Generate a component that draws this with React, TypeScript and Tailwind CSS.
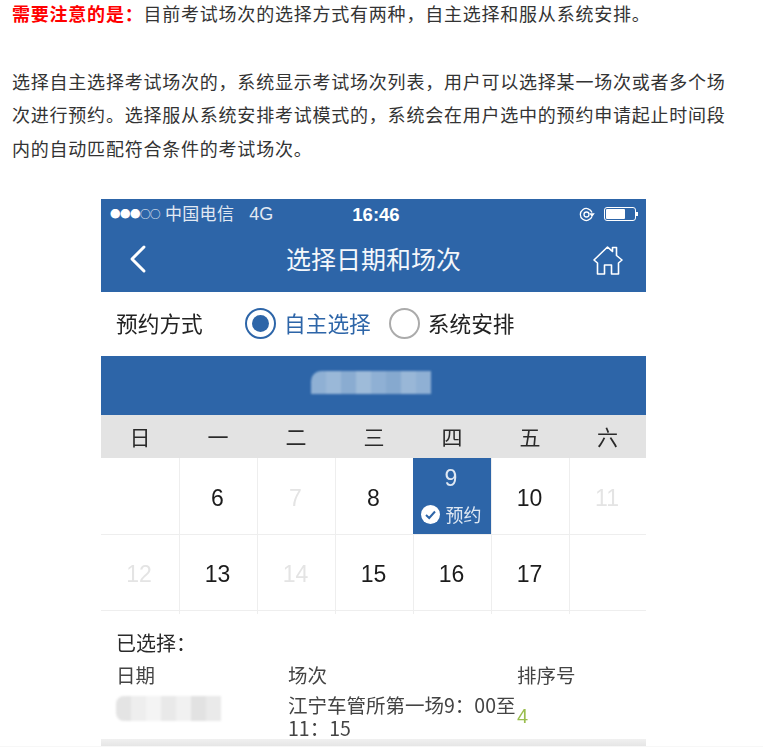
const FONT = "font-['Noto_Sans_CJK_SC','Liberation_Sans',sans-serif]"
const NUM = "font-['Liberation_Sans','Noto_Sans_CJK_SC',sans-serif]"
const COLS = 'grid-cols-[78px_78px_78px_78px_78px_78px_1fr]'
const weekdays = ['日', '一', '二', '三', '四', '五', '六']

function Cell({ value, muted, first }: { value?: string; muted?: boolean; first?: boolean }) {
  return (
    <div
      className={`flex items-center justify-center pr-[2px] pt-[3px] text-[23px] ${NUM} ${first ? '' : 'border-l border-[#eeeeee]'} ${
        muted ? 'text-[#e4e4e4]' : 'text-[#1c1c1c]'
      }`}
    >
      {value}
    </div>
  )
}

function Radio({ checked }: { checked?: boolean }) {
  return (
    <span
      className={`flex h-[31px] w-[31px] items-center justify-center rounded-full border-2 ${
        checked ? 'border-[#2d65a8]' : 'border-[#ababab]'
      }`}
    >
      {checked && <span className="h-[17px] w-[17px] rounded-full bg-[#2d65a8]" />}
    </span>
  )
}

function Mosaic({ colors, radius }: { colors: string[]; radius: string }) {
  return (
    <div className={`flex overflow-hidden blur-[1px] ${radius}`}>
      {colors.map((c, i) => (
        <div key={i} className="h-full w-[15px]" style={{ backgroundColor: c }} />
      ))}
    </div>
  )
}

export default function App() {
  return (
    <div className={`flex h-[755px] w-[763px] flex-col overflow-hidden bg-white ${FONT}`}>
      <div className="px-3 text-[18px] leading-[33.6px] tracking-[0.78px] text-[#333333]">
        <p className="-mt-[3px]">
          <strong className="font-bold text-[#ff0000]">需要注意的是：</strong>
          目前考试场次的选择方式有两种，自主选择和服从系统安排。
        </p>
        <p className="mt-[34px] w-[725px]">
          选择自主选择考试场次的，系统显示考试场次列表，用户可以选择某一场次或者多个场次进行预约。选择服从系统安排考试模式的，系统会在用户选中的预约申请起止时间段内的自动匹配符合条件的考试场次。
        </p>
      </div>

      <div className="ml-[101px] mt-[34px] w-[545px] blur-[0.4px]">
        <div className="h-[93px] bg-[#2d65a8] text-white">
          <div className="flex h-[30px] items-center justify-between pl-[9px] pr-[8px] text-[16px]">
            <div className="flex w-[174px] items-center whitespace-nowrap">
              <span className="text-[10.500px] leading-none tracking-[-0.500px]">●●●○○</span>
              <span className="-mt-[3px] ml-[5px] text-[17px] tracking-[0.300px] text-[#e2e9f3]">中国电信</span>
              <span className={`ml-[15px] text-[18px] text-[#e2e9f3] ${NUM}`}>4G</span>
            </div>
            <span className={`ml-[4px] text-[18.500px] font-bold ${NUM}`}>16:46</span>
            <div className="flex w-[174px] items-center justify-end gap-[9px]">
              <svg width="17" height="17" viewBox="0 0 17 17" fill="none" stroke="white" strokeWidth="1.3">
                <path d="M14 10.500a6 6 0 1 1 0-4" />
                <circle cx="8.500" cy="8.500" r="2.500" />
                <path d="M12.500 8h3l-1.500 2z" fill="white" />
              </svg>
              <div className="flex items-center">
                <div className="flex h-[14px] w-[32px] rounded-[3px] border border-white p-px">
                  <div className="w-[19px] rounded-[1px] bg-white" />
                </div>
                <div className="h-[4px] w-[2px] bg-white" />
              </div>
            </div>
          </div>
          <div className="flex h-[62px] items-center justify-between pl-[28px] pr-[22px]">
            <svg width="18" height="30" viewBox="0 0 18 30" fill="none" stroke="white" strokeWidth="3" strokeLinecap="round" strokeLinejoin="round" className="-mt-[3px]">
              <path d="M15 3 3 15l12 12" />
            </svg>
            <span className="-mt-[3px] ml-[8px] text-[25px] leading-none text-[#f4f7fb]">选择日期和场次</span>
            <svg width="32" height="32" viewBox="0 0 32 32" fill="none" stroke="white" strokeWidth="1.600" strokeLinejoin="round">
              <path d="M2 16 15.500 3l5 4.500V3.500h4v8L30 16l-3.500 3v11h-7v-9h-7v9h-7V19z" />
            </svg>
          </div>
        </div>

        <div className="flex h-[64px] items-center pb-[2px] pl-[15px] text-[21.700px] text-[#222222]">
          <span className="w-[129px]">预约方式</span>
          <Radio checked />
          <span className="ml-[8px] text-[#2d65a8]">自主选择</span>
          <span className="ml-[18px]">
            <Radio />
          </span>
          <span className="ml-[8px]">系统安排</span>
        </div>

        <div className="flex h-[59px] items-center justify-center bg-[#2d65a8] pb-[7px]">
          <div className="mr-[6px]">
            <Mosaic
              radius="h-[23px] rounded-tl-[10px]"
              colors={['#8fb0d4', '#9ab8d8', '#8aacd1', '#9ebbd9', '#8fb0d4', '#86a9cf', '#99b7d7', '#8fb0d4']}
            />
          </div>
        </div>

        <div className={`grid h-[43px] ${COLS} bg-[#e3e3e3] text-[#2a2a2a]`}>
          {weekdays.map((d) => (
            <div key={d} className="flex items-center justify-center text-[21px]">
              {d}
            </div>
          ))}
        </div>

        <div className={`grid ${COLS} grid-rows-[76px_76px_1px_3px]`}>
          <Cell first />
          <Cell value="6" />
          <Cell value="7" muted />
          <Cell value="8" />
          <div className="flex flex-col items-center bg-[#2d65a8] pr-[2px] text-[#dfe8f3]">
            <span className={`mt-[6px] text-[23px] leading-[28px] ${NUM}`}>9</span>
            <div className="mt-[10px] flex items-center gap-[6px]">
              <svg width="19" height="19" viewBox="0 0 19 19">
                <circle cx="9.500" cy="9.500" r="9.500" fill="white" />
                <path d="m5 10 3.200 3L14 6.500" fill="none" stroke="#2d65a8" strokeWidth="2" />
              </svg>
              <span className="text-[18px] leading-[24px]">预约</span>
            </div>
          </div>
          <Cell value="10" />
          <Cell value="11" muted />
          <div className={`col-span-7 grid ${COLS} border-t border-[#eeeeee]`}>
            <Cell value="12" muted first />
            <Cell value="13" />
            <Cell value="14" muted />
            <Cell value="15" />
            <Cell value="16" />
            <Cell value="17" />
            <Cell />
          </div>
          <div className="col-span-7 bg-[#eeeeee]" />
          <div className={`col-span-7 grid ${COLS}`}>
            {weekdays.map((d, i) => (
              <div key={d} className={i === 0 ? '' : 'border-l border-[#eeeeee]'} />
            ))}
          </div>
        </div>

        <div className="h-[125px] pl-[15px] text-[#333333]">
          <div className="pt-[15px] text-[20px] leading-[28px] text-[#2a2a2a]">已选择：</div>
          <div className="mt-[6px] grid grid-cols-[172px_229px_1fr] text-[19.500px] leading-[23px] text-[#444444]">
            <div className="h-[23px]">日期</div>
            <div>场次</div>
            <div>排序号</div>
            <div className="mt-[10px]">
              <Mosaic
                radius="h-[25px] w-[105px] rounded-l-[8px]"
                colors={['#e4e4e4', '#eeeeee', '#f4f4f4', '#e9e9e9', '#f1f1f1', '#e2e2e2', '#eaeaea']}
              />
            </div>
            <div className="mt-[7px] w-[229px]">江宁车管所第一场9：00至11：15</div>
            <div className={`mt-[19px] text-[20px] text-[#9abd4e] ${NUM}`}>4</div>
          </div>
        </div>

        <div className="h-[7px] bg-gradient-to-b from-[#f0f0f0] to-[#e6e6e6]" />
      </div>
      <div className="h-px bg-[#f7f7f7]" />
    </div>
  )
}
